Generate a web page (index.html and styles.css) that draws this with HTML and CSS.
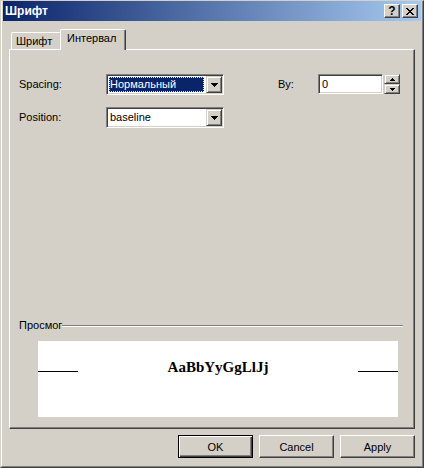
FILE: index.html
```html
<!DOCTYPE html>
<html lang="ru">
<head>
  <meta charset="UTF-8" />
  <title>Шрифт</title>
  <link rel="stylesheet" href="styles.css">
</head>
<body>
  <div class="window">
    <div class="frame">
      <div class="titlebar">
        <span class="title">Шрифт</span>
        <div class="caption-btns">
          <span class="cap-btn help">?</span>
          <span class="cap-btn close">
            <svg width="8" height="7" viewBox="0 0 8 7" shape-rendering="crispEdges"><path d="M0 0h2v1H0zM6 0h2v1H6zM1 1h2v1H1zM5 1h2v1H5zM2 2h4v1H2zM3 3h2v1H3zM2 4h4v1H2zM1 5h2v1H1zM5 5h2v1H5zM0 6h2v1H0zM6 6h2v1H6z"/></svg>
          </span>
        </div>
      </div>

      <div class="content">
        <div class="tabs">
          <div class="tab">Шрифт</div>
          <div class="tab active">Интервал</div>
        </div>

        <div class="panel">
          <div class="row">
            <span class="label">Spacing:</span>
            <div class="combo">
              <span class="value selected">Нормальный</span>
              <span class="drop-btn"><svg width="7" height="4" viewBox="0 0 7 4" shape-rendering="crispEdges"><path d="M0 0h7v1H0zM1 1h5v1H1zM2 2h3v1H2zM3 3h1v1H3z"/></svg></span>
            </div>
            <span class="label by-label">By:</span>
            <div class="edit">0</div>
            <div class="spin">
              <span class="spin-btn"><svg width="5" height="3" viewBox="0 0 5 3" shape-rendering="crispEdges"><path d="M2 0h1v1H2zM1 1h3v1H1zM0 2h5v1H0z"/></svg></span>
              <span class="spin-btn"><svg width="5" height="3" viewBox="0 0 5 3" shape-rendering="crispEdges"><path d="M0 0h5v1H0zM1 1h3v1H1zM2 2h1v1H2z"/></svg></span>
            </div>
          </div>

          <div class="row">
            <span class="label">Position:</span>
            <div class="combo">
              <span class="value">baseline</span>
              <span class="drop-btn"><svg width="7" height="4" viewBox="0 0 7 4" shape-rendering="crispEdges"><path d="M0 0h7v1H0zM1 1h5v1H1zM2 2h3v1H2zM3 3h1v1H3z"/></svg></span>
            </div>
          </div>

          <div class="group">
            <div class="group-head">
              <span class="group-label">Просмог</span>
              <span class="group-line"></span>
            </div>
            <div class="preview">
              <div class="sample">
                <span class="base-line"></span>
                <span class="sample-text">AaBbYyGgLlJj</span>
                <span class="base-line"></span>
              </div>
            </div>
          </div>
        </div>

        <div class="buttons">
          <button class="btn default">OK</button>
          <button class="btn">Cancel</button>
          <button class="btn">Apply</button>
        </div>
      </div>
    </div>
  </div>
</body>
</html>
```

FILE: styles.css
```css
* {
  margin: 0;
  padding: 0;
  box-sizing: border-box;
}

body {
  width: 424px;
  height: 468px;
  overflow: hidden;
  background: #d4d0c8;
  font-family: "Liberation Sans", Arial, sans-serif;
  font-size: 11px;
  color: #000;
}

.window {
  width: 424px;
  height: 468px;
  display: flex;
  flex-direction: column;
  background: #d4d0c8;
  border: 1px solid;
  border-color: #d4d0c8 #404040 #404040 #d4d0c8;
}

.frame {
  flex: 1;
  display: flex;
  flex-direction: column;
  border: 1px solid;
  border-top: 0;
  border-color: #fff #808080 #808080 #fff;
  padding: 0 1px;
}

/* title bar */
.titlebar {
  height: 20px;
  display: flex;
  align-items: center;
  justify-content: space-between;
  padding: 0 3px 0 2px;
  background: linear-gradient(to right, #0a246a, #a6caf0);
}

.title {
  color: #fff;
  font-weight: bold;
  font-size: 12px;
}

.caption-btns {
  display: flex;
  gap: 2px;
}

.cap-btn {
  width: 16px;
  height: 14px;
  display: flex;
  align-items: center;
  justify-content: center;
  background: #d4d0c8;
  border: 1px solid;
  border-color: #fff #404040 #404040 #fff;
  box-shadow: inset -1px -1px #808080;
  font-weight: bold;
  font-size: 12px;
  line-height: 12px;
}

/* body */
.content {
  flex: 1;
  display: flex;
  flex-direction: column;
  padding: 8px 6px 8px 6px;
}

.tabs {
  height: 20px;
  display: flex;
  align-items: flex-end;
  padding-left: 2px;
}

.tab {
  width: 51px;
  height: 17px;
  padding: 2px 0 0 4px;
  line-height: 13px;
  border: 1px solid;
  border-bottom: 0;
  border-color: #fff #404040 #fff #fff;
  border-radius: 2px 2px 0 0;
  box-shadow: inset -1px 0 #808080;
  background: #d4d0c8;
}

.tab.active {
  position: relative;
  z-index: 1;
  width: 66px;
  height: 21px;
  margin: 0 0 -1px -2px;
  padding: 2px 0 0 6px;
}

.panel {
  height: 380px;
  display: flex;
  flex-direction: column;
  padding: 24px 9px 11px 9px;
  border: 1px solid;
  border-color: #fff #404040 #404040 #fff;
  box-shadow: inset -1px -1px #808080;
}

.row {
  display: flex;
  align-items: flex-start;
}

.row + .row {
  margin-top: 12px;
}

.label {
  width: 87px;
  line-height: 21px;
}

.by-label {
  width: 40px;
  margin-left: 54px;
}

.combo {
  width: 118px;
  height: 21px;
  display: flex;
  padding: 1px;
  background: #fff;
  border: 1px solid;
  border-color: #808080 #fff #fff #808080;
  box-shadow: inset 1px 1px #404040, inset -1px -1px #d4d0c8;
}

.value {
  flex: 1;
  margin: 1px 2px 1px 1px;
  padding-left: 1px;
  line-height: 15px;
}

.value.selected {
  background: #0a246a;
  color: #fff;
  outline: 1px dotted #f5db95;
  outline-offset: -1px;
}

.drop-btn {
  width: 16px;
  height: 17px;
  display: flex;
  align-items: center;
  justify-content: center;
  background: #d4d0c8;
  border: 1px solid;
  border-color: #d4d0c8 #404040 #404040 #d4d0c8;
  box-shadow: inset 1px 1px #fff, inset -1px -1px #808080;
}

.edit {
  width: 65px;
  height: 20px;
  padding: 2px 0 0 3px;
  line-height: 15px;
  background: #fff;
  border: 1px solid;
  border-color: #808080 #fff #fff #808080;
  box-shadow: inset 1px 1px #404040, inset -1px -1px #d4d0c8;
}

.spin {
  width: 16px;
  height: 20px;
  margin-left: 1px;
  display: flex;
  flex-direction: column;
}

.spin-btn {
  height: 10px;
  display: flex;
  align-items: center;
  justify-content: center;
  background: #d4d0c8;
  border: 1px solid;
  border-color: #d4d0c8 #404040 #404040 #d4d0c8;
  box-shadow: inset 1px 1px #fff, inset -1px -1px #808080;
}

/* preview group */
.group {
  margin-top: auto;
}

.group-head {
  height: 13px;
  display: flex;
  align-items: center;
  padding-right: 2px;
}

.group-label {
  line-height: 13px;
}

.group-line {
  flex: 1;
  height: 2px;
  border-top: 1px solid #808080;
  border-bottom: 1px solid #fff;
}

.preview {
  width: 360px;
  height: 76px;
  margin: 9px 0 0 19px;
  padding-top: 18px;
  background: #fff;
}

.sample {
  display: flex;
  justify-content: space-between;
  align-items: baseline;
}

.base-line {
  display: inline-block;
  width: 40px;
  height: 1px;
  background: #000;
}

.sample-text {
  font-family: "Liberation Serif", "Times New Roman", serif;
  font-weight: bold;
  font-size: 15px;
  line-height: 17px;
}

/* dialog buttons */
.buttons {
  display: flex;
  justify-content: flex-end;
  gap: 6px;
  margin-top: 6px;
}

.btn {
  width: 75px;
  height: 23px;
  font-family: inherit;
  font-size: 11px;
  color: #000;
  background: #d4d0c8;
  border: 1px solid;
  border-color: #fff #404040 #404040 #fff;
  box-shadow: inset -1px -1px #808080;
}

.btn.default {
  border-color: #000;
  box-shadow: inset 1px 1px #fff, inset -1px -1px #404040, inset -2px -2px #808080;
}
```
